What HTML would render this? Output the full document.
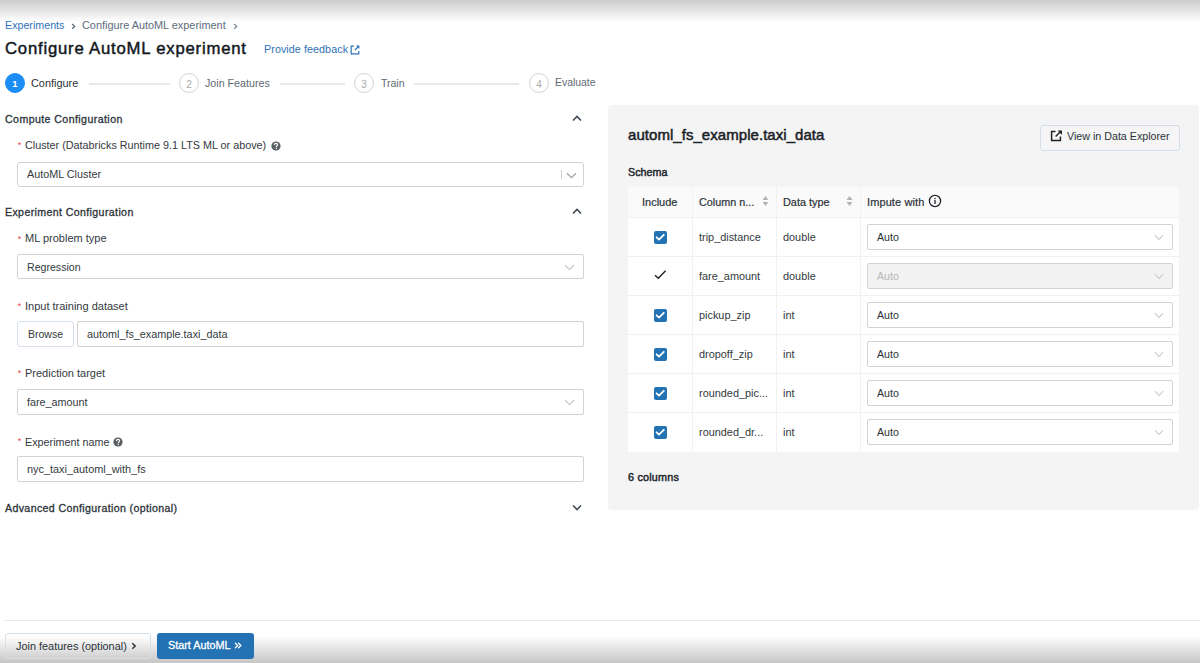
<!DOCTYPE html>
<html><head><meta charset="utf-8">
<style>
*{box-sizing:border-box;margin:0;padding:0}
html,body{width:1200px;height:663px;overflow:hidden;background:#fff}
body{position:relative;font-family:"Liberation Sans",sans-serif;color:#1f272d}
.t{position:absolute;white-space:nowrap;line-height:1}
.topg{position:absolute;left:0;top:0;width:1200px;height:22px;background:linear-gradient(#cdcdcd,#ffffff)}
.botg{position:absolute;left:0;top:636px;width:1200px;height:27px;background:linear-gradient(#ffffff,#c6c6c6)}
.box{position:absolute;border:1px solid #d2d2d2;border-radius:2px;background:#fff}
.circ{position:absolute;width:20px;height:20px;border-radius:50%;border:1px solid #d4d4d4;color:#a9a9a9;font-size:10px;line-height:21px;text-align:center}
.hl{position:absolute;height:2px;background:#e8e8e8}
.chk{position:absolute;width:13px;height:13px;border-radius:2px;background:#2272b4}
</style></head><body>
<div class="topg"></div>

<!-- breadcrumb -->
<div class="t" style="left:5px;top:20px;font-size:10.7px;color:#2f72b8">Experiments</div>
<svg style="position:absolute;left:71px;top:23px" width="5" height="7" viewBox="0 0 5 7"><path d="M1.2 1L3.7 3.4L1.2 5.8" fill="none" stroke="#5f6d7a" stroke-width="1.3"/></svg>
<div class="t" style="left:82px;top:20px;font-size:10.9px;color:#5c6d7c">Configure AutoML experiment</div>
<svg style="position:absolute;left:233px;top:23px" width="5" height="7" viewBox="0 0 5 7"><path d="M1.2 1L3.7 3.4L1.2 5.8" fill="none" stroke="#7b8894" stroke-width="1.3"/></svg>

<!-- title -->
<div class="t sb" style="left:5px;top:41px;font-size:16.7px;letter-spacing:0.8px;-webkit-text-stroke:0.45px #11171c;color:#11171c">Configure AutoML experiment</div>
<div class="t" style="left:264px;top:44px;font-size:10.8px;letter-spacing:0.04px;color:#2f72b8">Provide feedback</div>
<svg style="position:absolute;left:349.5px;top:45px" width="10" height="10" viewBox="0 0 10 10"><path d="M4 1.2H1.2V8.8H8.8V6" fill="none" stroke="#2f72b8" stroke-width="1.2"/><path d="M5 5L8.6 1.4" stroke="#2f72b8" stroke-width="1.2"/><path d="M6 0.6H9.4V4Z" fill="#2f72b8"/></svg>

<!-- steps -->
<div class="circ" style="left:5px;top:73px;background:#1b8df5;border-color:#1b8df5;color:#fff;font-weight:700;font-size:9.5px;line-height:19px">1</div>
<div class="t" style="left:31px;top:78px;font-size:10.9px;color:#2b3238">Configure</div>
<div class="hl" style="left:89px;top:83px;width:81px"></div>
<div class="circ" style="left:179px;top:73px">2</div>
<div class="t" style="left:205px;top:78px;font-size:10.7px;color:#5e6a74">Join Features</div>
<div class="hl" style="left:280px;top:83px;width:65px"></div>
<div class="circ" style="left:354px;top:73px">3</div>
<div class="t" style="left:381px;top:78px;font-size:10.5px;color:#5e6a74">Train</div>
<div class="hl" style="left:414px;top:83px;width:105px"></div>
<div class="circ" style="left:529px;top:73px">4</div>
<div class="t" style="left:555px;top:78px;font-size:10.4px;color:#5e6a74">Evaluate</div>

<!-- left form -->
<div class="t" style="left:5px;top:114px;font-size:10.6px;letter-spacing:0.42px;-webkit-text-stroke:0.3px #2b3238;color:#2b3238">Compute Configuration</div>
<svg style="position:absolute;left:572px;top:115px" width="10" height="7" viewBox="0 0 10 7"><path d="M1 5.5L5 1.5L9 5.5" fill="none" stroke="#3e4a55" stroke-width="1.6"/></svg>
<div class="t" style="left:17.8px;top:141px;font-size:9px;color:#ea4446">*</div>
<div class="t" style="left:25px;top:140px;font-size:10.8px;color:#333a40">Cluster (Databricks Runtime 9.1 LTS ML or above)</div>
<svg style="position:absolute;left:271px;top:141px" width="10" height="10" viewBox="0 0 10 10"><circle cx="5" cy="5" r="4.6" fill="#5b5f63"/><path d="M3.4 3.9C3.4 2.9 4.1 2.4 5 2.4C5.9 2.4 6.6 2.9 6.6 3.8C6.6 4.8 5.3 4.9 5.3 6" fill="none" stroke="#fff" stroke-width="1.2"/><rect x="4.6" y="6.7" width="1.3" height="1.2" fill="#fff"/></svg>
<div class="box" style="left:17px;top:162px;width:567px;height:25px;border-radius:3px"></div>
<div class="t" style="left:27px;top:169px;font-size:10.8px;color:#333a40">AutoML Cluster</div>
<div style="position:absolute;left:560.5px;top:170px;width:1.5px;height:9px;background:#cfcfcf"></div>
<svg style="position:absolute;left:566px;top:172px" width="11" height="7" viewBox="0 0 11 7"><path d="M1 1.2L5.5 5.6L10 1.2" fill="none" stroke="#a3a3a3" stroke-width="1.3"/></svg>

<div class="t" style="left:5px;top:207px;font-size:10.6px;letter-spacing:0.38px;-webkit-text-stroke:0.3px #2b3238;color:#2b3238">Experiment Configuration</div>
<svg style="position:absolute;left:572px;top:208px" width="10" height="7" viewBox="0 0 10 7"><path d="M1 5.5L5 1.5L9 5.5" fill="none" stroke="#3e4a55" stroke-width="1.6"/></svg>
<div class="t" style="left:17.8px;top:235px;font-size:9px;color:#ea4446">*</div>
<div class="t" style="left:25px;top:233px;font-size:11px;color:#333a40">ML problem type</div>
<div class="box" style="left:17px;top:254px;width:567px;height:25px"></div>
<div class="t" style="left:27px;top:262px;font-size:10.6px;color:#333a40">Regression</div>
<svg style="position:absolute;left:564px;top:264px" width="11" height="7" viewBox="0 0 11 7"><path d="M1 1.2L5.5 5.6L10 1.2" fill="none" stroke="#bdbdbd" stroke-width="1.1"/></svg>

<div class="t" style="left:17.8px;top:302px;font-size:9px;color:#ea4446">*</div>
<div class="t" style="left:25px;top:301px;font-size:11px;color:#333a40">Input training dataset</div>
<div class="box" style="left:17px;top:321px;width:57px;height:26px;border-color:#d5e0ea;border-radius:3px"></div>
<div class="t" style="left:28px;top:329px;font-size:10.5px;color:#333a40">Browse</div>
<div class="box" style="left:77px;top:321px;width:507px;height:26px"></div>
<div class="t" style="left:87px;top:329px;font-size:10.8px;color:#333a40">automl_fs_example.taxi_data</div>

<div class="t" style="left:17.8px;top:369px;font-size:9px;color:#ea4446">*</div>
<div class="t" style="left:25px;top:368px;font-size:11px;color:#333a40">Prediction target</div>
<div class="box" style="left:17px;top:389px;width:567px;height:26px"></div>
<div class="t" style="left:27px;top:397px;font-size:10.8px;color:#333a40">fare_amount</div>
<svg style="position:absolute;left:564px;top:399px" width="11" height="7" viewBox="0 0 11 7"><path d="M1 1.2L5.5 5.6L10 1.2" fill="none" stroke="#bdbdbd" stroke-width="1.1"/></svg>

<div class="t" style="left:17.8px;top:437px;font-size:9px;color:#ea4446">*</div>
<div class="t" style="left:25px;top:437px;font-size:10.8px;color:#333a40">Experiment name</div>
<svg style="position:absolute;left:113px;top:437px" width="10" height="10" viewBox="0 0 10 10"><circle cx="5" cy="5" r="4.6" fill="#5b5f63"/><path d="M3.4 3.9C3.4 2.9 4.1 2.4 5 2.4C5.9 2.4 6.6 2.9 6.6 3.8C6.6 4.8 5.3 4.9 5.3 6" fill="none" stroke="#fff" stroke-width="1.2"/><rect x="4.6" y="6.7" width="1.3" height="1.2" fill="#fff"/></svg>
<div class="box" style="left:17px;top:456px;width:567px;height:26px"></div>
<div class="t" style="left:27px;top:464px;font-size:10.9px;color:#333a40">nyc_taxi_automl_with_fs</div>

<div class="t" style="left:5px;top:503px;font-size:10.6px;letter-spacing:0.37px;-webkit-text-stroke:0.3px #2b3238;color:#2b3238">Advanced Configuration (optional)</div>
<svg style="position:absolute;left:572px;top:504px" width="10" height="7" viewBox="0 0 10 7"><path d="M1 1.5L5 5.5L9 1.5" fill="none" stroke="#3e4a55" stroke-width="1.6"/></svg>

<!-- right panel -->
<div style="position:absolute;left:608px;top:105px;width:591px;height:405px;background:#f4f4f4;border-radius:4px"></div>
<div class="t" style="left:628px;top:127px;font-size:15px;letter-spacing:0.05px;-webkit-text-stroke:0.5px #1a2127;color:#1a2127">automl_fs_example.taxi_data</div>
<div class="box" style="left:1040px;top:125px;width:140px;height:26px;background:#f5f5f5;border-color:#d3dee8;border-radius:3px"></div>
<div class="t" style="left:1067px;top:131px;font-size:10.7px;color:#2b3238">View in Data Explorer</div>
<svg style="position:absolute;left:1050px;top:130px" width="13" height="12" viewBox="0 0 13 12"><path d="M5.5 1.6H1.6V10.4H10.4V6.5" fill="none" stroke="#1f2328" stroke-width="1.5"/><path d="M5.6 6.4L10.6 1.4" stroke="#1f2328" stroke-width="1.4"/><path d="M7.6 0.5H12V4.9Z" fill="#1f2328"/></svg>
<div class="t" style="left:628px;top:167px;font-size:10.7px;letter-spacing:0.05px;-webkit-text-stroke:0.45px #22282d;color:#22282d">Schema</div>

<!-- table -->
<div style="position:absolute;left:628px;top:187px;width:551px;height:265px;background:#fff"></div>
<div style="position:absolute;left:628px;top:187px;width:551px;height:30px;background:#fafafa"></div>

<div class="t" style="left:642px;top:197px;font-size:11px;color:#2b3238;-webkit-text-stroke:0.2px #2b3238">Include</div>
<div class="t" style="left:699px;top:197px;font-size:10.8px;color:#2b3238;-webkit-text-stroke:0.2px #2b3238">Column n...</div>
<div class="t" style="left:783px;top:197px;font-size:10.9px;color:#2b3238;-webkit-text-stroke:0.2px #2b3238">Data type</div>
<div class="t" style="left:867px;top:197px;font-size:11px;letter-spacing:0.1px;color:#2b3238;-webkit-text-stroke:0.2px #2b3238">Impute with</div>
<svg style="position:absolute;left:762px;top:195px" width="7" height="12" viewBox="0 0 7 12"><path d="M0.5 5L3.5 1L6.5 5Z M0.5 7L3.5 11L6.5 7Z" fill="#b3b3b3"/></svg>
<svg style="position:absolute;left:846px;top:195px" width="7" height="12" viewBox="0 0 7 12"><path d="M0.5 5L3.5 1L6.5 5Z M0.5 7L3.5 11L6.5 7Z" fill="#b3b3b3"/></svg>
<svg style="position:absolute;left:928px;top:194px" width="14" height="14" viewBox="0 0 14 14"><circle cx="7" cy="7" r="5.6" fill="none" stroke="#1f2328" stroke-width="1.3"/><rect x="6.35" y="6" width="1.3" height="4" fill="#1f2328"/><rect x="6.35" y="3.9" width="1.3" height="1.3" fill="#1f2328"/></svg>
<div style="position:absolute;left:692px;top:187px;width:1px;height:265px;background:#f1f1f1"></div>
<div style="position:absolute;left:776px;top:187px;width:1px;height:265px;background:#f1f1f1"></div>
<div style="position:absolute;left:860px;top:187px;width:1px;height:265px;background:#f1f1f1"></div>
<div style="position:absolute;left:628px;top:217px;width:551px;height:1px;background:#f1f1f1"></div>
<div style="position:absolute;left:628px;top:256px;width:551px;height:1px;background:#f1f1f1"></div>
<div style="position:absolute;left:628px;top:295px;width:551px;height:1px;background:#f1f1f1"></div>
<div style="position:absolute;left:628px;top:334px;width:551px;height:1px;background:#f1f1f1"></div>
<div style="position:absolute;left:628px;top:373px;width:551px;height:1px;background:#f1f1f1"></div>
<div style="position:absolute;left:628px;top:412px;width:551px;height:1px;background:#f1f1f1"></div>
<div class="chk" style="left:654px;top:231px"><svg width="13" height="13" viewBox="0 0 13 13" style="position:absolute;left:0;top:0"><path d="M2.6 6.3L5 8.6L9.8 3.8" fill="none" stroke="#fff" stroke-width="1.8" stroke-linecap="round" stroke-linejoin="round"/></svg></div>
<div class="t" style="left:699px;top:232px;font-size:10.9px;color:#333a40">trip_distance</div>
<div class="t" style="left:783px;top:232px;font-size:10.9px;color:#333a40">double</div>
<div class="box" style="left:867px;top:224px;width:306px;height:26px;background:#fff;border-color:#d3d3d3"></div>
<div class="t" style="left:877px;top:232px;font-size:10.6px;color:#2b3238">Auto</div>
<svg style="position:absolute;left:1154px;top:234px" width="10" height="7" viewBox="0 0 10 7"><path d="M1 1.2L5 5.6L9 1.2" fill="none" stroke="#b5b5b5" stroke-width="1"/></svg>
<svg style="position:absolute;left:653px;top:269px" width="14" height="12" viewBox="0 0 14 12"><path d="M2 6.2L5.3 9.3L12.6 1.8" fill="none" stroke="#1f2328" stroke-width="1.4"/></svg>
<div class="t" style="left:699px;top:271px;font-size:10.9px;color:#333a40">fare_amount</div>
<div class="t" style="left:783px;top:271px;font-size:10.9px;color:#333a40">double</div>
<div class="box" style="left:867px;top:263px;width:306px;height:26px;background:#f2f2f2;border-color:#d3d3d3"></div>
<div class="t" style="left:877px;top:271px;font-size:10.6px;color:#b8b8b8">Auto</div>
<svg style="position:absolute;left:1154px;top:273px" width="10" height="7" viewBox="0 0 10 7"><path d="M1 1.2L5 5.6L9 1.2" fill="none" stroke="#b5b5b5" stroke-width="1"/></svg>
<div class="chk" style="left:654px;top:309px"><svg width="13" height="13" viewBox="0 0 13 13" style="position:absolute;left:0;top:0"><path d="M2.6 6.3L5 8.6L9.8 3.8" fill="none" stroke="#fff" stroke-width="1.8" stroke-linecap="round" stroke-linejoin="round"/></svg></div>
<div class="t" style="left:699px;top:310px;font-size:10.9px;color:#333a40">pickup_zip</div>
<div class="t" style="left:783px;top:310px;font-size:10.9px;color:#333a40">int</div>
<div class="box" style="left:867px;top:302px;width:306px;height:26px;background:#fff;border-color:#d3d3d3"></div>
<div class="t" style="left:877px;top:310px;font-size:10.6px;color:#2b3238">Auto</div>
<svg style="position:absolute;left:1154px;top:312px" width="10" height="7" viewBox="0 0 10 7"><path d="M1 1.2L5 5.6L9 1.2" fill="none" stroke="#b5b5b5" stroke-width="1"/></svg>
<div class="chk" style="left:654px;top:348px"><svg width="13" height="13" viewBox="0 0 13 13" style="position:absolute;left:0;top:0"><path d="M2.6 6.3L5 8.6L9.8 3.8" fill="none" stroke="#fff" stroke-width="1.8" stroke-linecap="round" stroke-linejoin="round"/></svg></div>
<div class="t" style="left:699px;top:349px;font-size:10.9px;color:#333a40">dropoff_zip</div>
<div class="t" style="left:783px;top:349px;font-size:10.9px;color:#333a40">int</div>
<div class="box" style="left:867px;top:341px;width:306px;height:26px;background:#fff;border-color:#d3d3d3"></div>
<div class="t" style="left:877px;top:349px;font-size:10.6px;color:#2b3238">Auto</div>
<svg style="position:absolute;left:1154px;top:351px" width="10" height="7" viewBox="0 0 10 7"><path d="M1 1.2L5 5.6L9 1.2" fill="none" stroke="#b5b5b5" stroke-width="1"/></svg>
<div class="chk" style="left:654px;top:387px"><svg width="13" height="13" viewBox="0 0 13 13" style="position:absolute;left:0;top:0"><path d="M2.6 6.3L5 8.6L9.8 3.8" fill="none" stroke="#fff" stroke-width="1.8" stroke-linecap="round" stroke-linejoin="round"/></svg></div>
<div class="t" style="left:699px;top:388px;font-size:10.9px;color:#333a40">rounded_pic...</div>
<div class="t" style="left:783px;top:388px;font-size:10.9px;color:#333a40">int</div>
<div class="box" style="left:867px;top:380px;width:306px;height:26px;background:#fff;border-color:#d3d3d3"></div>
<div class="t" style="left:877px;top:388px;font-size:10.6px;color:#2b3238">Auto</div>
<svg style="position:absolute;left:1154px;top:390px" width="10" height="7" viewBox="0 0 10 7"><path d="M1 1.2L5 5.6L9 1.2" fill="none" stroke="#b5b5b5" stroke-width="1"/></svg>
<div class="chk" style="left:654px;top:426px"><svg width="13" height="13" viewBox="0 0 13 13" style="position:absolute;left:0;top:0"><path d="M2.6 6.3L5 8.6L9.8 3.8" fill="none" stroke="#fff" stroke-width="1.8" stroke-linecap="round" stroke-linejoin="round"/></svg></div>
<div class="t" style="left:699px;top:427px;font-size:10.9px;color:#333a40">rounded_dr...</div>
<div class="t" style="left:783px;top:427px;font-size:10.9px;color:#333a40">int</div>
<div class="box" style="left:867px;top:419px;width:306px;height:26px;background:#fff;border-color:#d3d3d3"></div>
<div class="t" style="left:877px;top:427px;font-size:10.6px;color:#2b3238">Auto</div>
<svg style="position:absolute;left:1154px;top:429px" width="10" height="7" viewBox="0 0 10 7"><path d="M1 1.2L5 5.6L9 1.2" fill="none" stroke="#b5b5b5" stroke-width="1"/></svg>
<div class="t" style="left:628px;top:472px;font-size:10.8px;letter-spacing:0.2px;-webkit-text-stroke:0.45px #22282d;color:#22282d">6 columns</div>

<!-- bottom -->
<div class="hl" style="left:5px;top:620px;width:1195px;height:1px;background:#e2e9f0"></div>
<div class="botg"></div>
<div class="box" style="left:5px;top:633px;width:146px;height:26px;border-color:#d5dfe8;background:transparent;border-radius:3px"></div>
<div class="t" style="left:16px;top:641px;font-size:10.9px;color:#2b3238">Join features (optional)</div>
<svg style="position:absolute;left:131px;top:642px" width="6" height="8" viewBox="0 0 6 8"><path d="M1.3 1.2L4.2 4L1.3 6.8" fill="none" stroke="#2b3238" stroke-width="1.5"/></svg>
<div style="position:absolute;left:157px;top:633px;width:97px;height:26px;background:#2272b4;border-radius:3px"></div>
<div class="t" style="left:168px;top:640px;font-size:10.8px;-webkit-text-stroke:0.3px #fff;color:#fff">Start AutoML</div>
<svg style="position:absolute;left:234px;top:642px" width="8" height="7" viewBox="0 0 8 7"><path d="M1 0.8L3.6 3.5L1 6.2M4.2 0.8L6.8 3.5L4.2 6.2" fill="none" stroke="#fff" stroke-width="1.3"/></svg>
</body></html>
